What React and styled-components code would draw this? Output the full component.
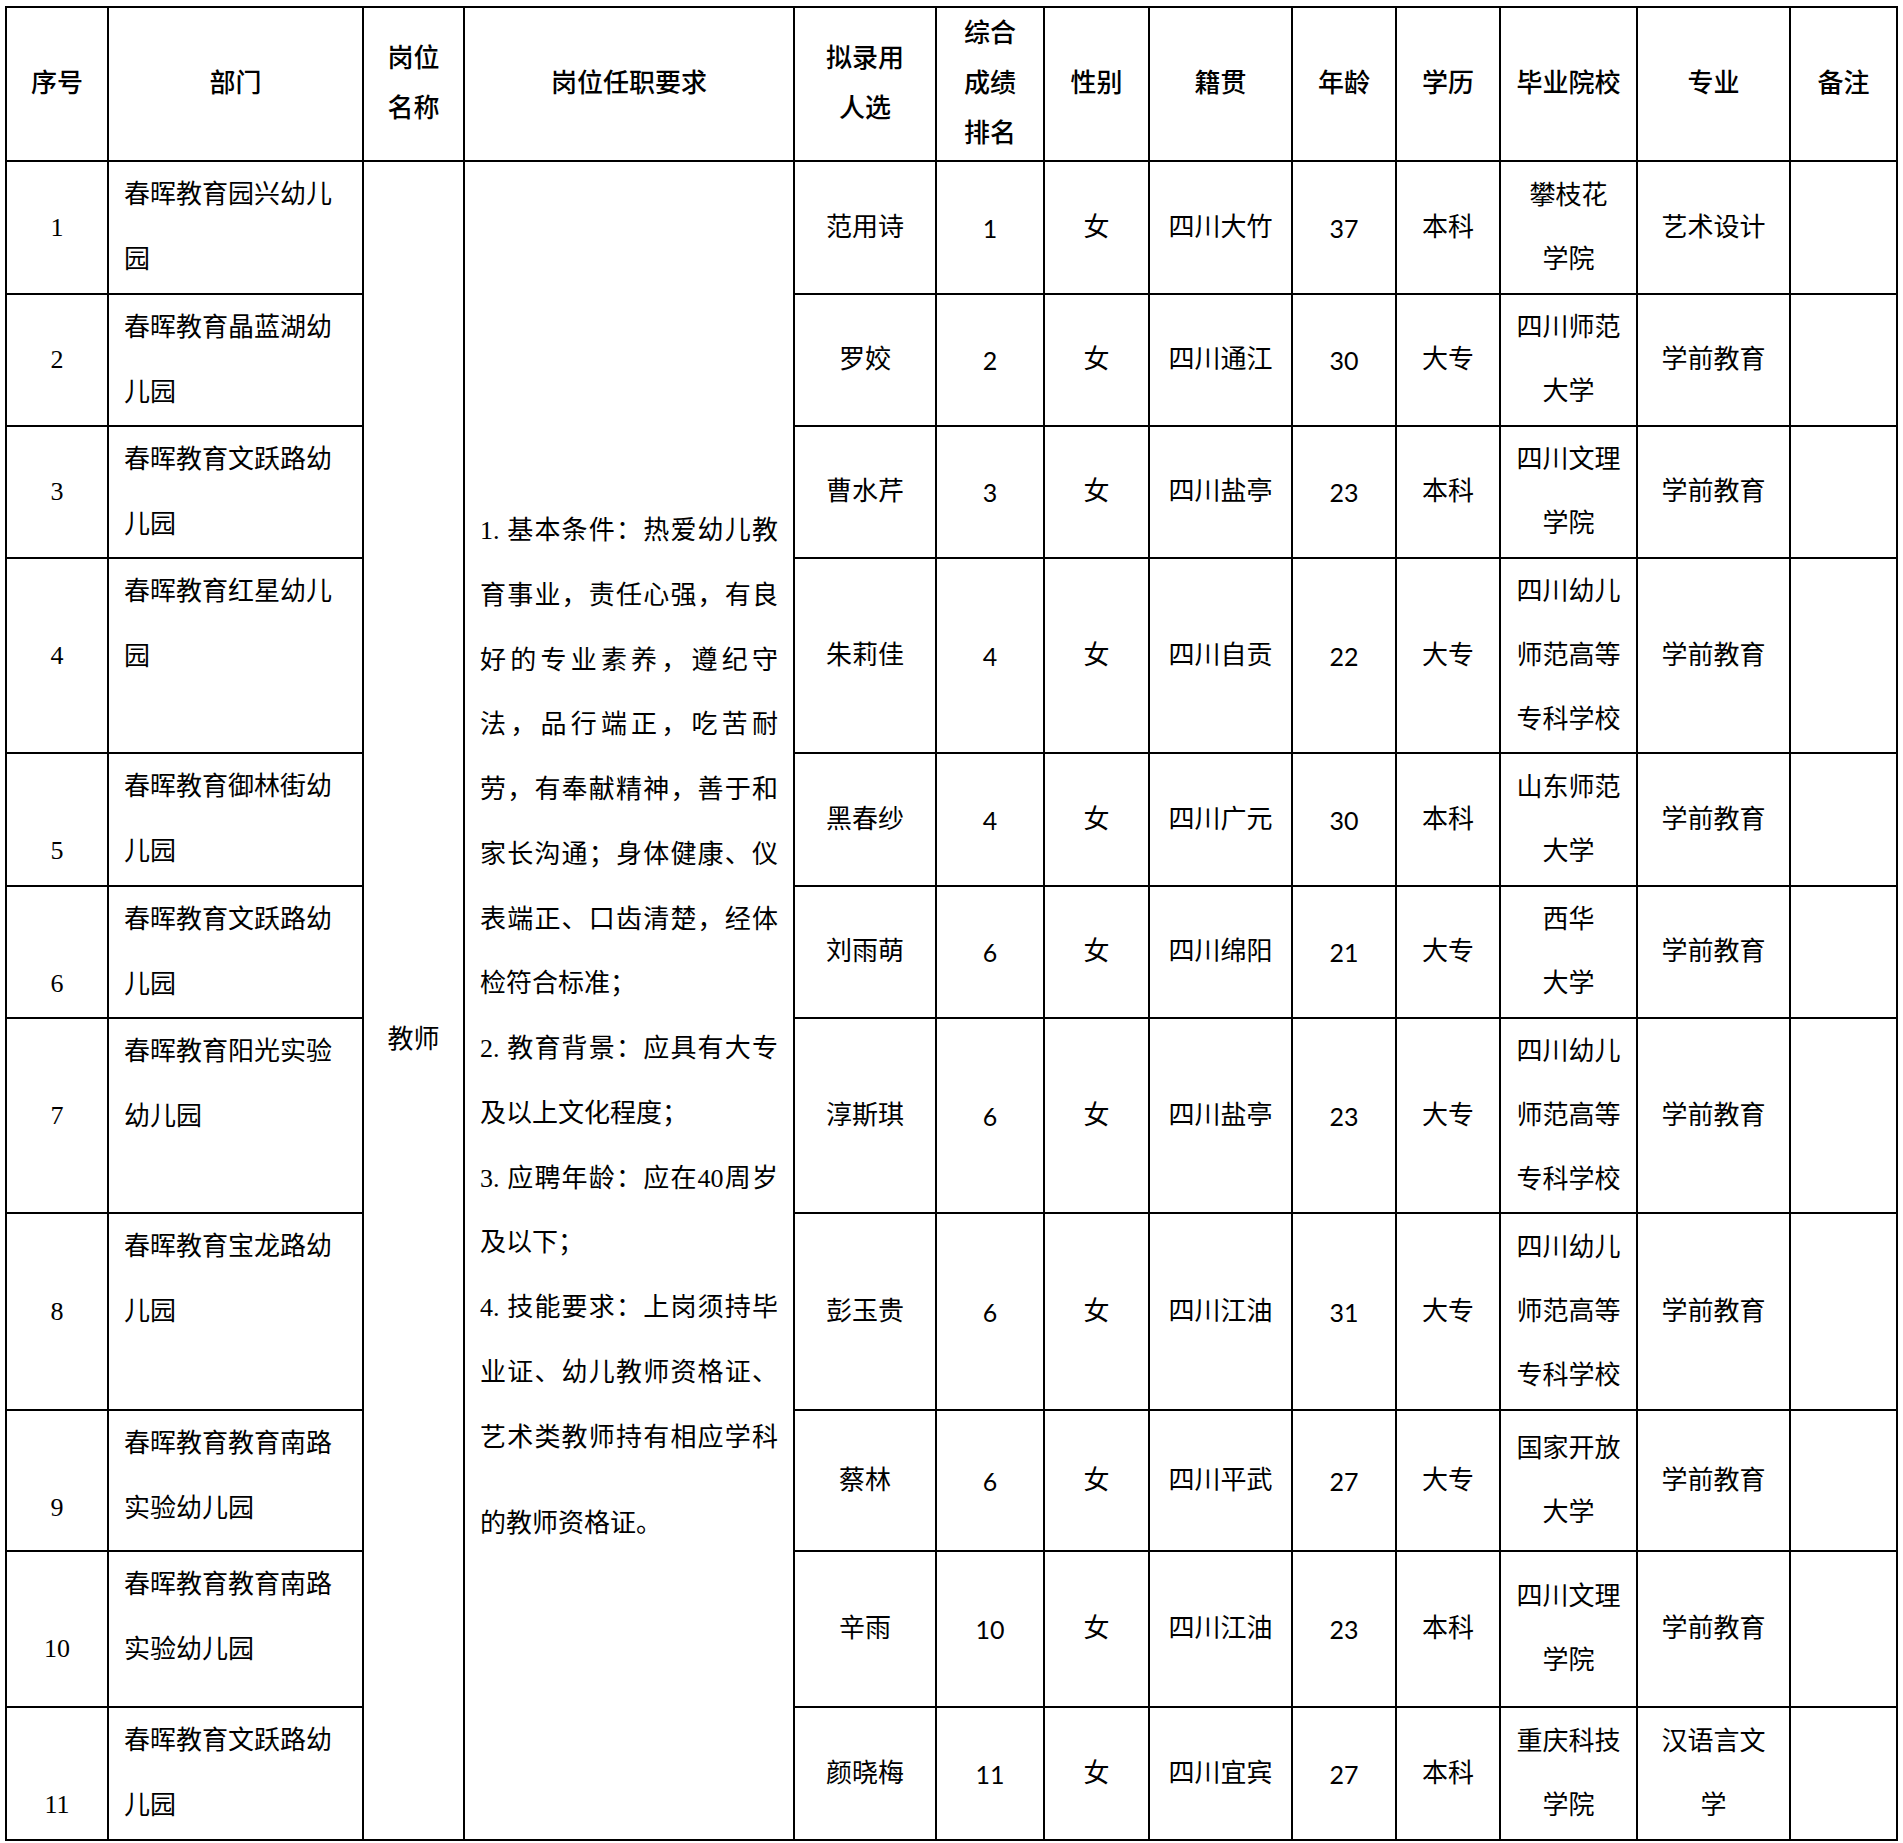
import React from "react";
import styled, { createGlobalStyle } from "styled-components";

const Global = createGlobalStyle`
  html, body { margin: 0; padding: 0; background: #ffffff; }
  body {
    font-family: "Liberation Serif", "Noto Sans CJK SC", serif;
    color: #000;
  }
`;

const Page = styled.div`
  padding: 6px 0 3px 5px;
`;

const Table = styled.table`
  border-collapse: collapse;
  table-layout: fixed;
  font-family: "Liberation Serif", "Noto Sans CJK SC", serif;
  font-size: 26px;
  color: #000;
`;

const Col = styled.col`
  width: ${(p) => p.$w}px;
`;

const Row = styled.tr`
  height: ${(p) => p.$h}px;
`;

const HeadCell = styled.th`
  border: 2px solid #000;
  padding: 0 4px;
  line-height: 50px;
  font-weight: 500;
  text-align: center;
  vertical-align: middle;
`;

const Cell = styled.td`
  border: 2px solid #000;
  padding: 0 8px;
  line-height: 64px;
  font-weight: 400;
  text-align: center;
  vertical-align: middle;
  white-space: nowrap;
`;

const IndexCell = styled(Cell)`
  font-family: "Liberation Serif", serif;
  vertical-align: ${(p) => (p.$drop ? "top" : "middle")};
  padding-top: ${(p) => (p.$drop ? 65 : 0)}px;
`;

const DeptCell = styled(Cell)`
  text-align: left;
  vertical-align: top;
  padding: 1px 8px 0 15px;
  line-height: 64.5px;
`;

const PostCell = styled(Cell)`
  padding-top: 78px;
`;

const ReqCell = styled(Cell)`
  text-align: left;
  white-space: normal;
  line-height: 64.75px;
  padding: 55px 15px 0 15px;
`;

const NumCell = styled(Cell)`
  font-family: Lato, "Liberation Sans", sans-serif;
  font-size: 25px;
`;

const Line = styled.div`
  white-space: nowrap;
`;

const ReqLine = styled.div`
  text-align: ${(p) => (p.$justify ? "justify" : "left")};
  text-align-last: ${(p) => (p.$justify ? "justify" : "left")};
  margin-top: ${(p) => (p.$gap ? 22 : 0)}px;
`;

const widths = [102, 255, 101, 330, 142, 108, 105, 143, 104, 104, 137, 153, 107];

const headers = [
  ["序号"],
  ["部门"],
  ["岗位", "名称"],
  ["岗位任职要求"],
  ["拟录用", "人选"],
  ["综合", "成绩", "排名"],
  ["性别"],
  ["籍贯"],
  ["年龄"],
  ["学历"],
  ["毕业院校"],
  ["专业"],
  ["备注"],
];

const college3 = ["四川幼儿", "师范高等", "专科学校"];

const rows = [
  { no: 1, h: 133, dept: ["春晖教育园兴幼儿", "园"], name: "范用诗", rank: 1, origin: "四川大竹", age: 37, edu: "本科", school: ["攀枝花", "学院"], major: ["艺术设计"] },
  { no: 2, h: 131, dept: ["春晖教育晶蓝湖幼", "儿园"], name: "罗姣", rank: 2, origin: "四川通江", age: 30, edu: "大专", school: ["四川师范", "大学"], major: ["学前教育"] },
  { no: 3, h: 132, dept: ["春晖教育文跃路幼", "儿园"], name: "曹水芹", rank: 3, origin: "四川盐亭", age: 23, edu: "本科", school: ["四川文理", "学院"], major: ["学前教育"] },
  { no: 4, h: 195, dept: ["春晖教育红星幼儿", "园"], name: "朱莉佳", rank: 4, origin: "四川自贡", age: 22, edu: "大专", school: college3, major: ["学前教育"] },
  { no: 5, h: 133, drop: true, dept: ["春晖教育御林街幼", "儿园"], name: "黑春纱", rank: 4, origin: "四川广元", age: 30, edu: "本科", school: ["山东师范", "大学"], major: ["学前教育"] },
  { no: 6, h: 132, drop: true, dept: ["春晖教育文跃路幼", "儿园"], name: "刘雨萌", rank: 6, origin: "四川绵阳", age: 21, edu: "大专", school: ["西华", "大学"], major: ["学前教育"] },
  { no: 7, h: 195, dept: ["春晖教育阳光实验", "幼儿园"], name: "淳斯琪", rank: 6, origin: "四川盐亭", age: 23, edu: "大专", school: college3, major: ["学前教育"] },
  { no: 8, h: 197, dept: ["春晖教育宝龙路幼", "儿园"], name: "彭玉贵", rank: 6, origin: "四川江油", age: 31, edu: "大专", school: college3, major: ["学前教育"] },
  { no: 9, h: 141, drop: true, dept: ["春晖教育教育南路", "实验幼儿园"], name: "蔡林", rank: 6, origin: "四川平武", age: 27, edu: "大专", school: ["国家开放", "大学"], major: ["学前教育"] },
  { no: 10, h: 156, drop: true, dept: ["春晖教育教育南路", "实验幼儿园"], name: "辛雨", rank: 10, origin: "四川江油", age: 23, edu: "本科", school: ["四川文理", "学院"], major: ["学前教育"] },
  { no: 11, h: 133, drop: true, dept: ["春晖教育文跃路幼", "儿园"], name: "颜晓梅", rank: 11, origin: "四川宜宾", age: 27, edu: "本科", school: ["重庆科技", "学院"], major: ["汉语言文", "学"] },
];

const requirement = [
  { t: "1. 基本条件：热爱幼儿教", j: true },
  { t: "育事业，责任心强，有良", j: true },
  { t: "好的专业素养，遵纪守", j: true },
  { t: "法，品行端正，吃苦耐", j: true },
  { t: "劳，有奉献精神，善于和", j: true },
  { t: "家长沟通；身体健康、仪", j: true },
  { t: "表端正、口齿清楚，经体", j: true },
  { t: "检符合标准；" },
  { t: "2. 教育背景：应具有大专", j: true },
  { t: "及以上文化程度；" },
  { t: "3. 应聘年龄：应在40周岁", j: true },
  { t: "及以下；" },
  { t: "4. 技能要求：上岗须持毕", j: true },
  { t: "业证、幼儿教师资格证、", j: true },
  { t: "艺术类教师持有相应学科", j: true },
  { t: "的教师资格证。", gap: true },
];

const Lines = ({ items }) => items.map((l, i) => <Line key={i}>{l}</Line>);

export default function App() {
  return (
    <>
      <Global />
      <Page>
        <Table>
          <colgroup>
            {widths.map((w, i) => (
              <Col key={i} $w={w} />
            ))}
          </colgroup>
          <thead>
            <Row $h={154}>
              {headers.map((h, i) => (
                <HeadCell key={i}>
                  <Lines items={h} />
                </HeadCell>
              ))}
            </Row>
          </thead>
          <tbody>
            {rows.map((r, idx) => (
              <Row key={r.no} $h={r.h}>
                <IndexCell $drop={r.drop}>{r.no}</IndexCell>
                <DeptCell>
                  <Lines items={r.dept} />
                </DeptCell>
                {idx === 0 && (
                  <>
                    <PostCell rowSpan={rows.length}>教师</PostCell>
                    <ReqCell rowSpan={rows.length}>
                      {requirement.map((l, i) => (
                        <ReqLine key={i} $justify={l.j} $gap={l.gap}>
                          {l.t}
                        </ReqLine>
                      ))}
                    </ReqCell>
                  </>
                )}
                <Cell>{r.name}</Cell>
                <NumCell>{r.rank}</NumCell>
                <Cell>女</Cell>
                <Cell>{r.origin}</Cell>
                <NumCell>{r.age}</NumCell>
                <Cell>{r.edu}</Cell>
                <Cell>
                  <Lines items={r.school} />
                </Cell>
                <Cell>
                  <Lines items={r.major} />
                </Cell>
                <Cell />
              </Row>
            ))}
          </tbody>
        </Table>
      </Page>
    </>
  );
}
